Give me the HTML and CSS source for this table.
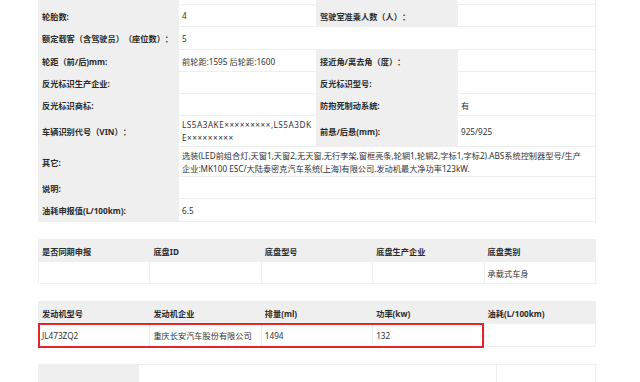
FILE: index.html
```html
<!DOCTYPE html>
<html lang="zh-CN">
<head>
<meta charset="utf-8">
<title>车辆参数</title>
<link rel="stylesheet" href="styles.css">
</head>
<body>
<div class="page">
  <div class="block grid-main">
    <div class="c lab"></div><div class="c"></div><div class="c lab"></div><div class="c"></div>

    <div class="c lab">轮胎数:</div><div class="c">4</div><div class="c lab">驾驶室准乘人数（人）：</div><div class="c"></div>

    <div class="c lab">额定载客（含驾驶员）（座位数）：</div><div class="c span3">5</div>

    <div class="c lab">轮距（前/后)mm:</div><div class="c">前轮距:1595 后轮距:1600</div><div class="c lab">接近角/离去角（度）：</div><div class="c"></div>

    <div class="c lab">反光标识生产企业:</div><div class="c"></div><div class="c lab">反光标识型号:</div><div class="c"></div>

    <div class="c lab">反光标识商标:</div><div class="c"></div><div class="c lab">防抱死制动系统:</div><div class="c">有</div>

    <div class="c lab">车辆识别代号（VIN）：</div><div class="c wrap breakall vin">LS5A3AKE×××××××××,LS5A3DKE×××××××××</div><div class="c lab">前悬/后悬(mm):</div><div class="c">925/925</div>

    <div class="c lab">其它:</div><div class="c span3 wrap note">选装(LED前组合灯,天窗1,天窗2,无天窗,无行李架,窗框亮条,轮辋1,轮辋2,字标1,字标2).ABS系统控制器型号/生产企业:MK100 ESC/大陆泰密克汽车系统(上海)有限公司.发动机最大净功率123kW.</div>

    <div class="c lab">说明:</div><div class="c span3"></div>

    <div class="c lab">油耗申报值(L/100km):</div><div class="c span3">6.5</div>
  </div>

  <div class="block grid-five">
    <div class="c head">是否同期申报</div><div class="c head">底盘ID</div><div class="c head">底盘型号</div><div class="c head">底盘生产企业</div><div class="c head">底盘类别</div>
    <div class="c"></div><div class="c"></div><div class="c"></div><div class="c"></div><div class="c">承载式车身</div>
  </div>

  <div class="block marked">
    <div class="grid-five grid-engine">
      <div class="c head">发动机型号</div><div class="c head">发动机企业</div><div class="c head">排量(ml)</div><div class="c head">功率(kw)</div><div class="c head">油耗(L/100km)</div>
      <div class="c">JL473ZQ2</div><div class="c">重庆长安汽车股份有限公司</div><div class="c">1494</div><div class="c">132</div><div class="c"></div>
    </div>
    <div class="highlight"></div>
  </div>

  <div class="block grid-last">
    <div class="c lab"></div><div class="c"></div><div class="c"></div>
  </div>
</div>
</body>
</html>
```

FILE: styles.css
```css
* { box-sizing: border-box; }

html, body {
  margin: 0;
  padding: 0;
  background: #ffffff;
}

html {
  height: 382px;
  overflow: hidden;
}

body {
  font-family: "Noto Sans", "Noto Sans CJK SC", sans-serif;
  font-size: 8.2px;
  color: #333333;
  text-spacing-trim: space-all;
  height: 382px;
  overflow: hidden;
}

.page {
  width: 558px;
  margin: -18px 0 0 38px;
}

.block {
  margin-bottom: 17px;
}

.grid-main,
.grid-five,
.grid-last {
  display: grid;
  gap: 1px;
  background: #efefef;
  border: 1px solid #efefef;
}

.grid-main {
  grid-template-columns: 139px 137px 140px 137px;
  grid-template-rows: 21px 21px 22px 21px 21px 21px 30px 29px 21px 22px;
}

.grid-five {
  grid-template-columns: repeat(5, 1fr);
  grid-template-rows: 21px 21px;
}

.grid-engine {
  grid-template-rows: 21px 22px;
}

.grid-last {
  grid-template-columns: 99px 357px 1fr;
  grid-template-rows: 22px;
}

.c {
  background: #ffffff;
  padding: 0 3px;
  display: flex;
  align-items: center;
  white-space: nowrap;
  overflow: hidden;
}

.c.lab,
.c.head {
  background: #efefef;
  font-weight: 700;
  color: #2b2b2b;
}

.span3 {
  grid-column: span 3;
}

.wrap {
  white-space: normal;
  line-height: 13px;
}

.breakall {
  word-break: break-all;
}

.vin {
  letter-spacing: 0.5px;
}

.note {
  padding-right: 9px;
}

.marked {
  position: relative;
}

.highlight {
  position: absolute;
  left: 0;
  top: 22px;
  width: 446px;
  height: 25px;
  border: 2px solid #e3262b;
  pointer-events: none;
}
```
